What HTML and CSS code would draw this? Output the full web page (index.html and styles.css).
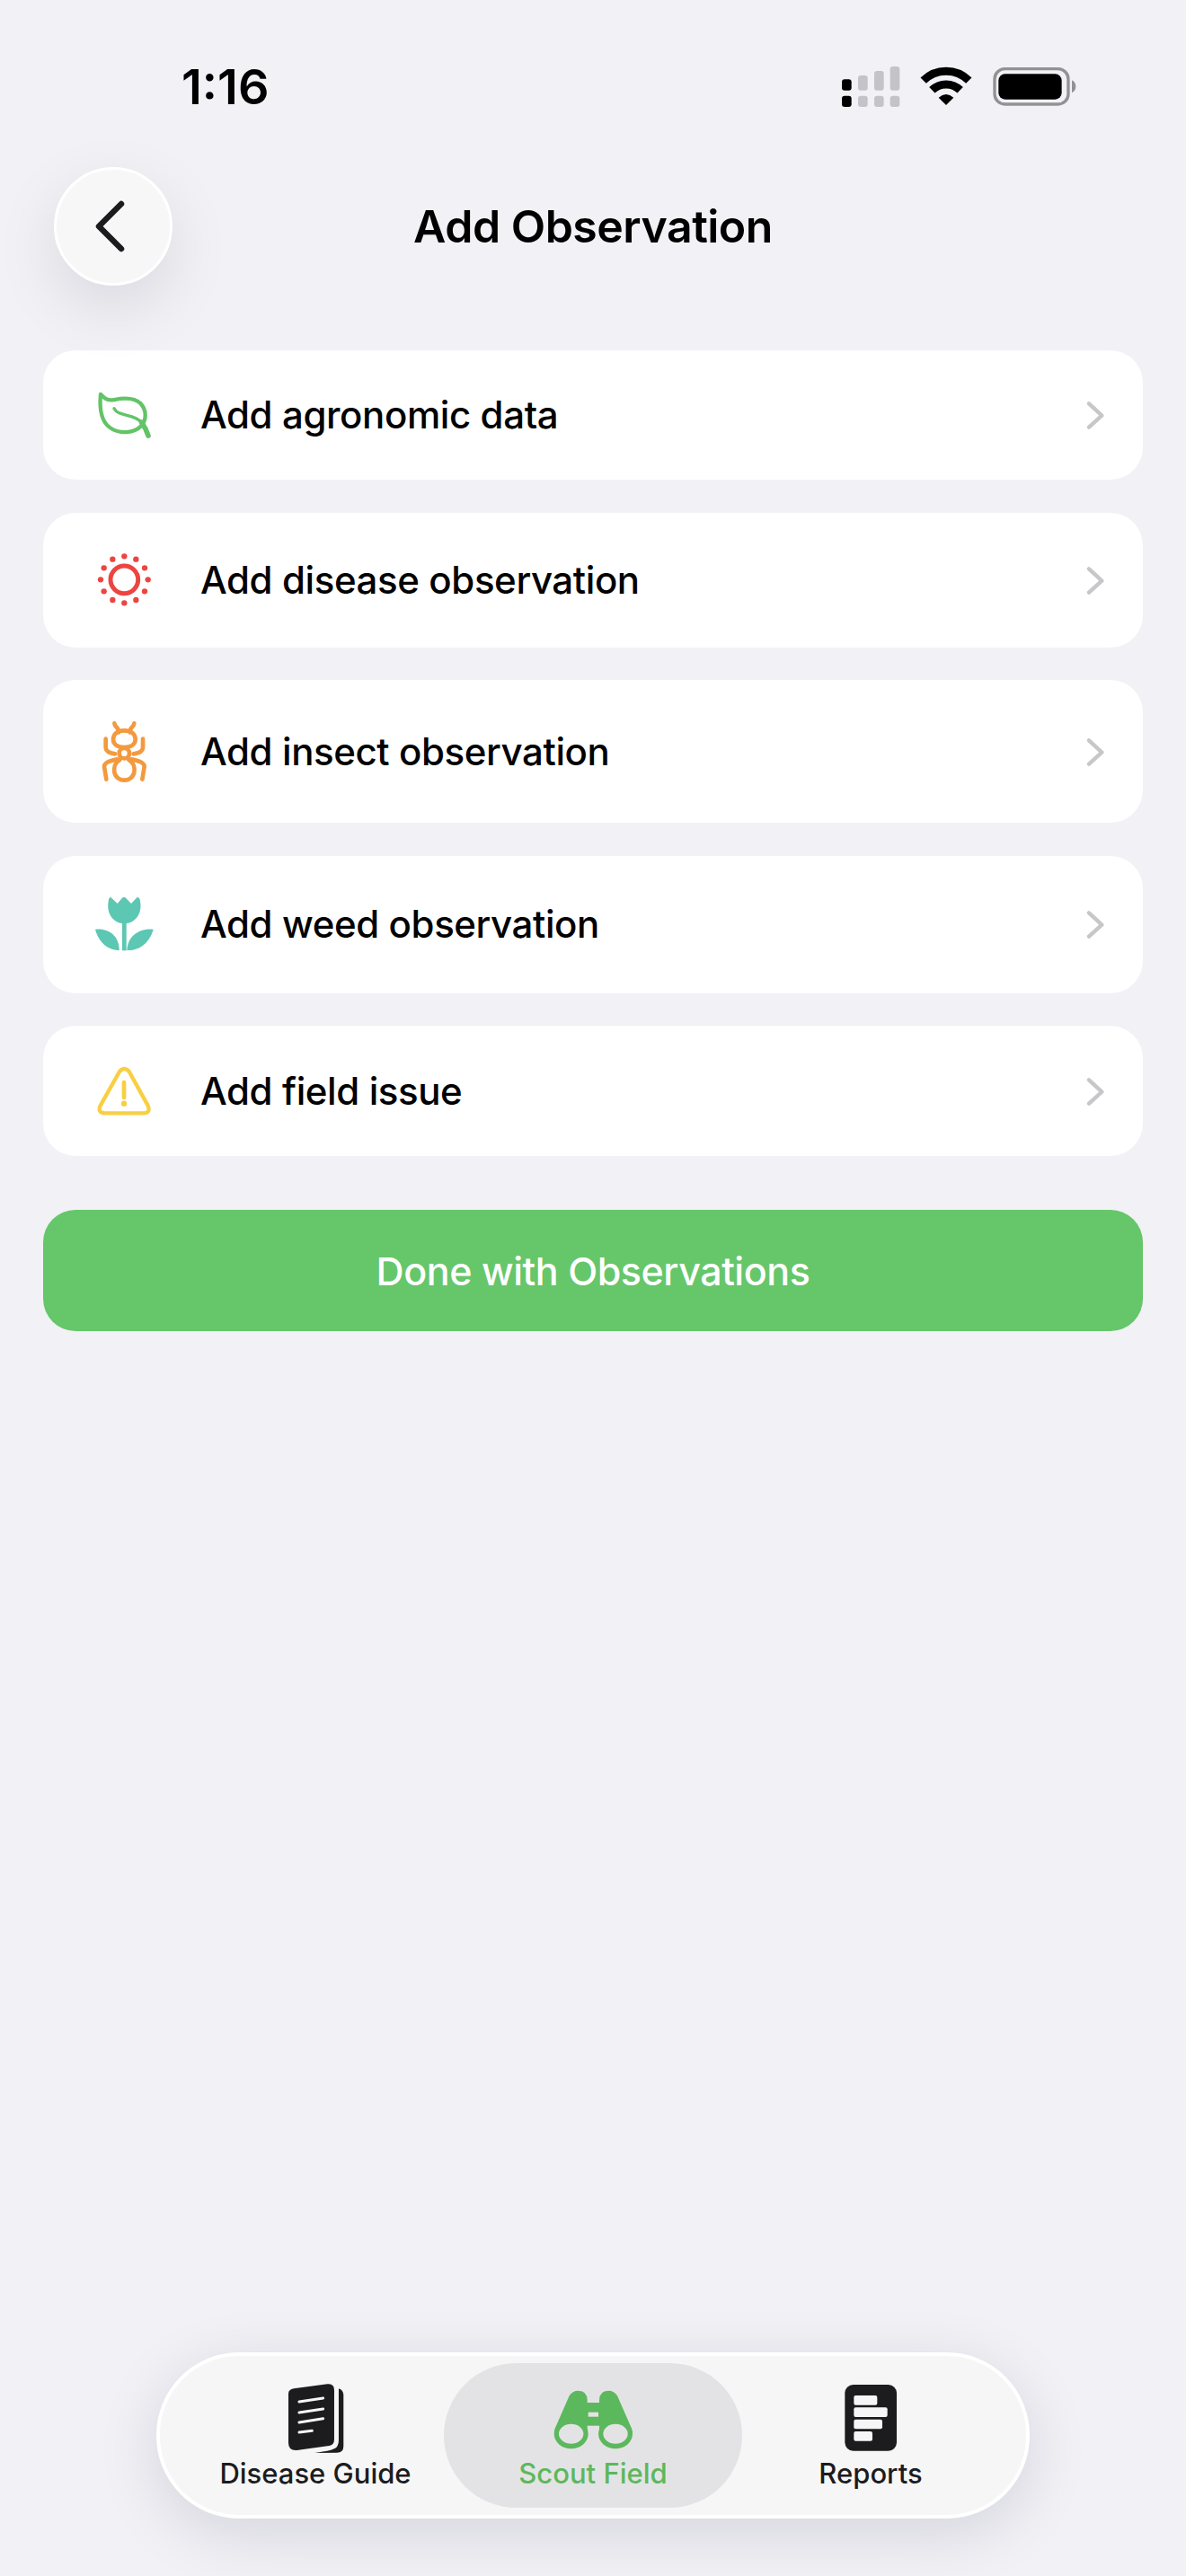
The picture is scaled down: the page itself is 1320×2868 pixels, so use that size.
FILE: index.html
```html
<!DOCTYPE html>
<html lang="en">
<head>
<meta charset="utf-8">
<title>Add Observation</title>
<link rel="stylesheet" href="styles.css">
</head>
<body>
<div class="page">
  <div class="status">
    <span class="time">1:16</span>
    <svg class="status-icons" viewBox="160 60 800 155" aria-hidden="true">
      <g fill="#000">
        <rect x="172" y="115" width="32" height="37" rx="9"/>
        <rect x="172" y="170" width="32" height="37" rx="9"/>
      </g>
      <g fill="#c4c4c8">
        <rect x="226" y="102" width="32" height="50" rx="9"/>
        <rect x="226" y="170" width="32" height="37" rx="9"/>
        <rect x="280" y="87" width="32" height="65" rx="9"/>
        <rect x="280" y="170" width="32" height="37" rx="9"/>
        <rect x="333" y="72" width="32" height="80" rx="9"/>
        <rect x="333" y="170" width="32" height="37" rx="9"/>
      </g>
      <g fill="none" stroke="#000" stroke-width="27">
        <path d="M444 119 A108 108 0 0 1 596 119"/>
        <path d="M473 151 A67 67 0 0 1 567 151"/>
      </g>
      <path d="M520 201 L495 176 Q520 154 545 176 Z" fill="#000"/>
      <rect x="682" y="80" width="246" height="118" rx="34" fill="none" stroke="#929295" stroke-width="10"/>
      <rect x="695" y="97" width="211" height="85" rx="22" fill="#000"/>
      <path d="M940 118 Q953 124 953 139 Q953 154 940 160 Z" fill="#929295"/>
    </svg>
  </div>

  <header class="header">
    <button class="back" type="button" aria-label="Back">
      <svg class="back-icon" viewBox="0 0 40 64" aria-hidden="true">
        <path d="M32 7 L7 32 L32 57"/>
      </svg>
    </button>
    <h1 class="title">Add Observation</h1>
    <span class="header-spacer"></span>
  </header>

  <main class="list">
    <a class="row row-agro">
      <span class="row-icon">
        <svg class="icon-leaf" viewBox="80 190 190 174" aria-hidden="true">
          <path d="M95 208 C108 222 118 230 140 226 C170 220 205 216 228 238 C250 262 248 292 232 312 C205 340 160 340 130 322 C98 302 90 260 95 208 Z"/>
          <path class="leaf-vein" d="M140 255 C155 285 205 270 232 302"/>
          <path class="leaf-stem" d="M232 302 C242 316 250 332 254 346"/>
        </svg>
      </span>
      <span class="row-label">Add agronomic data</span>
      <svg class="chevron" viewBox="325 228 66 96" aria-hidden="true"><path d="M337 238 L380 278 L337 317"/></svg>
    </a>
    <a class="row row-disease">
      <span class="row-icon">
        <svg class="icon-sun" viewBox="80 745 188 170" aria-hidden="true">
          <circle class="sun-ring" cx="174" cy="830" r="46"/>
          <g class="sun-dots">
            <circle cx="174" cy="752" r="9.5"/><circle cx="213" cy="762" r="9.5"/>
            <circle cx="242" cy="791" r="9.5"/><circle cx="253" cy="830" r="9.5"/>
            <circle cx="242" cy="869" r="9.5"/><circle cx="213" cy="898" r="9.5"/>
            <circle cx="174" cy="908" r="9.5"/><circle cx="135" cy="898" r="9.5"/>
            <circle cx="106" cy="869" r="9.5"/><circle cx="95" cy="830" r="9.5"/>
            <circle cx="106" cy="791" r="9.5"/><circle cx="135" cy="762" r="9.5"/>
          </g>
        </svg>
      </span>
      <span class="row-label">Add disease observation</span>
      <svg class="chevron" viewBox="325 228 66 96" aria-hidden="true"><path d="M337 238 L380 278 L337 317"/></svg>
    </a>
    <a class="row row-insect">
      <span class="row-icon">
        <svg class="icon-ant" viewBox="60 35 170 215" aria-hidden="true">
          <path d="M112 48 C114 62 128 62 126 78"/>
          <path d="M178 48 C176 62 162 62 164 78"/>
          <path d="M145 72 C120 72 108 86 108 102 C108 118 122 128 145 128 C168 128 182 118 182 102 C182 86 170 72 145 72 Z"/>
          <circle cx="145" cy="148" r="17"/>
          <path d="M83 100 L83 130 Q84 146 114 150"/>
          <path d="M207 100 L207 130 Q206 146 176 150"/>
          <path d="M85 235 L78 192 Q78 176 122 168"/>
          <path d="M205 235 L212 192 Q212 176 168 168"/>
          <path d="M130 170 C112 180 110 200 112 212 C116 230 132 238 145 238 C158 238 174 230 178 212 C180 200 178 180 160 170"/>
        </svg>
      </span>
      <span class="row-label">Add insect observation</span>
      <svg class="chevron" viewBox="325 228 66 96" aria-hidden="true"><path d="M337 238 L380 278 L337 317"/></svg>
    </a>
    <a class="row row-weed">
      <span class="row-icon">
        <svg class="icon-tulip" viewBox="70 85 206 190" aria-hidden="true">
          <path d="M128 91 Q121 91 120 104 C112 150 140 179 173 179 C206 179 234 150 226 104 Q225 91 216 91 L196 112 L178 93 Q172 87 166 93 L150 112 Z"/>
          <rect x="166" y="170" width="14" height="99"/>
          <path d="M76 198 C112 194 156 212 156 268 C116 268 86 238 76 198 Z"/>
          <path d="M270 198 C232 194 184 214 182 268 C226 270 258 240 270 198 Z"/>
        </svg>
      </span>
      <span class="row-label">Add weed observation</span>
      <svg class="chevron" viewBox="325 228 66 96" aria-hidden="true"><path d="M337 238 L380 278 L337 317"/></svg>
    </a>
    <a class="row row-issue">
      <span class="row-icon">
        <svg class="icon-warn" viewBox="78 650 188 168" aria-hidden="true">
          <path class="warn-tri" d="M156 668 Q172 650 188 668 L250 780 Q262 806 236 807 L108 807 Q80 806 93 780 Z"/>
          <path class="warn-bar" d="M171 704 L171 755"/>
          <circle class="warn-dot" cx="171" cy="775" r="9.5"/>
        </svg>
      </span>
      <span class="row-label">Add field issue</span>
      <svg class="chevron" viewBox="325 228 66 96" aria-hidden="true"><path d="M337 238 L380 278 L337 317"/></svg>
    </a>
    <button class="done" type="button">Done with Observations</button>
  </main>

  <nav class="tabbar">
    <a class="tab">
      <svg class="tab-icon icon-book" viewBox="110 60 205 240" aria-hidden="true">
        <path class="ink" d="M290 85 Q305 90 306 106 L306 278 Q306 298 284 299 L210 300 Q270 292 282 282 Q290 274 290 255 Z"/>
        <path class="ink" d="M122 102 Q122 88 140 85 L252 70 Q275 67 275 90 L275 255 Q275 273 258 276 L150 291 Q122 293 122 266 Z"/>
        <g class="book-lines">
          <path d="M158 129 L238 117"/><path d="M158 165 L238 153"/>
          <path d="M158 198 L238 185"/><path d="M158 231 L201 226"/>
        </g>
      </svg>
      <span class="tab-label">Disease Guide</span>
    </a>
    <a class="tab tab-active">
      <svg class="tab-icon icon-bino" viewBox="70 80 284 212" aria-hidden="true">
        <path d="M132 105 Q142 88 162 88 Q192 88 192 120 L192 235 L85 235 Q78 226 88 205 Z"/>
        <path d="M292 105 Q282 88 262 88 Q232 88 232 120 L232 235 L339 235 Q346 226 336 205 Z"/>
        <rect x="190" y="128" width="44" height="77"/>
        <ellipse cx="138" cy="232" rx="57" ry="50"/>
        <ellipse cx="286" cy="232" rx="57" ry="50"/>
        <g class="bino-holes">
          <ellipse cx="138" cy="232" rx="41" ry="33"/>
          <ellipse cx="286" cy="232" rx="41" ry="33"/>
          <rect x="195" y="160" width="34" height="15"/>
        </g>
      </svg>
      <span class="tab-label">Scout Field</span>
    </a>
    <a class="tab">
      <svg class="tab-icon icon-report" viewBox="110 60 195 240" aria-hidden="true">
        <rect class="ink" x="120" y="72" width="173" height="221" rx="28"/>
        <g class="report-bars">
          <rect x="150" y="108" width="78" height="32" rx="6"/>
          <rect x="150" y="148" width="112" height="32" rx="6"/>
          <rect x="150" y="188" width="95" height="32" rx="6"/>
          <rect x="150" y="228" width="62" height="32" rx="6"/>
        </g>
      </svg>
      <span class="tab-label">Reports</span>
    </a>
  </nav>
</div>
</body>
</html>
```

FILE: styles.css
```css
* { box-sizing: border-box; }
html, body { margin: 0; padding: 0; }
body {
  background: #f1f1f6;
  font-family: Inter, "Liberation Sans", sans-serif;
  color: #000;
}
.page {
  height: 2868px;
  display: flex;
  flex-direction: column;
  overflow: hidden;
}

/* status bar */
.status {
  height: 186px;
  display: flex;
  justify-content: space-between;
  align-items: flex-start;
  padding: 64px 120px 0 202px;
}
.time { font-size: 54px; line-height: 66px; font-weight: 600; }
.status-icons { width: 266.67px; height: 51.67px; margin-top: 6px; }

/* header */
.header {
  position: relative;
  z-index: 2;
  height: 132px;
  padding: 0 60px;
  display: grid;
  grid-template-columns: 1fr auto 1fr;
  align-items: center;
}
.back {
  width: 132px;
  height: 132px;
  padding: 0;
  border-radius: 50%;
  border: 3px solid #fff;
  background: #f7f7f8;
  box-shadow: 0 24px 70px rgba(0, 0, 20, 0.1);
  display: flex;
  align-items: center;
  justify-content: center;
}
.back-icon { width: 40px; height: 64px; margin-right: 6px; }
.back-icon path { fill: none; stroke: #1c1c1e; stroke-width: 6.5; stroke-linecap: round; stroke-linejoin: round; }
.title { margin: 0; font-size: 50px; line-height: 60px; font-weight: 600; letter-spacing: -0.5px; }

/* list */
.list {
  margin-top: 72px;
  padding: 0 48px;
  display: flex;
  flex-direction: column;
  gap: 36.5px;
}
.row {
  display: flex;
  align-items: center;
  background: #fff;
  border-radius: 36px;
  padding: 0 42px 0 52px;
}
.row-agro { height: 144px; }
.row-disease { height: 150px; }
.row-insect { height: 159px; }
.row-weed { height: 153px; }
.row-issue { height: 145px; }
.row-icon {
  width: 76px;
  margin-right: 47px;
  display: flex;
  justify-content: center;
}
.row-label { flex: 1; font-size: 42px; line-height: 54px; font-weight: 500; letter-spacing: -0.4px; }
.chevron { width: 22px; height: 32px; }
.chevron path { fill: none; stroke: #c7c7c9; stroke-width: 13; stroke-linecap: round; stroke-linejoin: round; }

.icon-leaf { width: 63.3px; height: 58px; flex: none; margin-left: 1px; }
.icon-leaf path { fill: none; stroke: #62c466; stroke-width: 13; stroke-linecap: round; stroke-linejoin: round; }
.icon-leaf .leaf-vein { stroke-width: 10; }
.icon-leaf .leaf-stem { stroke-width: 17; }
.icon-sun { width: 62.7px; height: 56.7px; flex: none; overflow: visible; }
.sun-ring { fill: none; stroke: #ec4541; stroke-width: 15; }
.sun-dots { fill: #ec4541; }
.icon-ant { width: 56.7px; height: 71.7px; flex: none; }
.icon-ant path, .icon-ant circle { fill: none; stroke: #f3993e; stroke-width: 14; stroke-linecap: round; stroke-linejoin: round; }
.icon-tulip { width: 68.7px; height: 63.3px; flex: none; fill: #5cc7b3; }
.icon-warn { width: 62.7px; height: 56px; flex: none; }
.warn-tri { fill: none; stroke: #f8cf42; stroke-width: 13; stroke-linejoin: round; }
.warn-bar { stroke: #f8cf42; stroke-width: 14; stroke-linecap: round; }
.warn-dot { fill: #f8cf42; }

.done {
  margin-top: 23.5px;
  height: 135px;
  border: 0;
  border-radius: 36px;
  background: #66c66a;
  color: #fff;
  font-family: inherit;
  font-size: 43px;
  font-weight: 500;
  letter-spacing: -0.45px;
}

/* tab bar */
.tabbar {
  margin: auto auto 64px;
  width: 972px;
  height: 185px;
  padding: 8px 30px;
  border: 4px solid #fff;
  border-radius: 92px;
  background: #f6f6f6;
  box-shadow: 0 16px 70px rgba(0, 0, 30, 0.12);
  display: grid;
  grid-template-columns: 286px 332px 286px;
}
.tab {
  border-radius: 81px;
  display: flex;
  flex-direction: column;
  align-items: center;
  padding-top: 20px;
}
.tab-active { background: #e3e3e5; color: #5cb85c; }
.tab-icon { display: block; flex: none; }
.icon-book { width: 68.3px; height: 80px; }
.icon-bino { width: 94.7px; height: 70.7px; margin-top: 8px; margin-bottom: 1.3px; fill: #5cb85c; }
.icon-report { width: 65px; height: 80px; }
.ink { fill: #1c1c1e; }
.book-lines path { fill: none; stroke: #f6f6f6; stroke-width: 9; stroke-linecap: round; }
.report-bars { fill: #f6f6f6; }
.bino-holes { fill: #e3e3e5; }
.tab-label { margin-top: 4px; font-size: 31px; line-height: 38px; font-weight: 500; color: #1c1c1e; white-space: nowrap; }
.tab-active .tab-label { color: #5cb85c; }
```
